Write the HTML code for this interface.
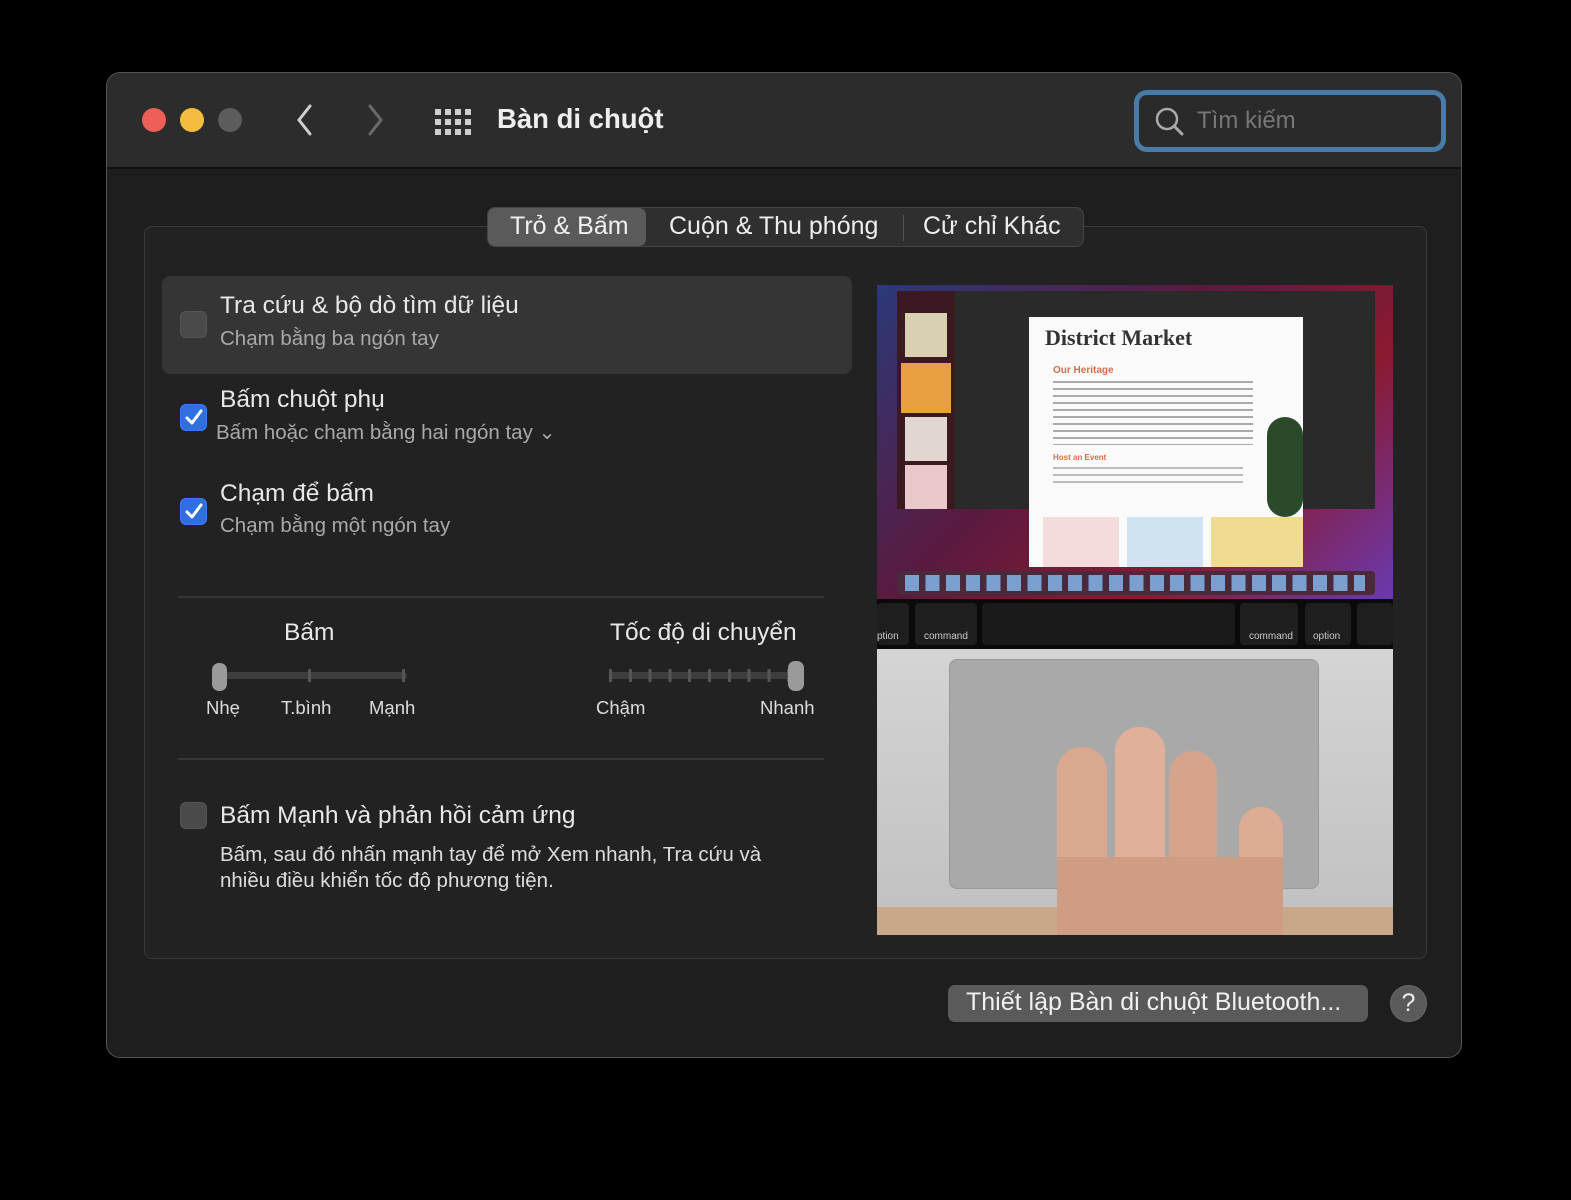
<!DOCTYPE html>
<html><head><meta charset="utf-8"><style>
*{margin:0;padding:0;box-sizing:border-box}
body{width:1571px;height:1200px;background:#000;font-family:"Liberation Sans","DejaVu Sans",sans-serif;position:relative;overflow:hidden;color:#e6e6e6}
.abs{position:absolute}
.win{left:106px;top:72px;width:1356px;height:986px;border-radius:14px;background:#1e1e1e;border:1px solid #555;overflow:hidden}
.tb{left:0;top:0;width:100%;height:96px;background:#2c2c2c;border-bottom:2px solid #111}
.dot{width:24px;height:24px;border-radius:50%;top:35px}
.panel{left:37px;top:153px;width:1283px;height:733px;border:1px solid #3a3a3a;border-radius:8px;background:#222}
.cb{width:27px;height:27px;border-radius:6px;background:#4a4a4a;border:1px solid #555}
.cbon{background:#2f6fe0;border-color:#3d7cf0}
.t1{font-size:24.5px;color:#e8e8e8}
.t2{font-size:20.5px;color:#a9a9a9}
.lbl{font-size:18.5px;color:#ddd}
.tab{font-size:25px}
</style></head><body>
<div class="abs win">
 <div class="abs tb">
  <div class="abs dot" style="left:35px;background:#ed5f57"></div>
  <div class="abs dot" style="left:73px;background:#f4bd3f"></div>
  <div class="abs dot" style="left:111px;background:#5c5c5c"></div>
  <svg class="abs" style="left:188px;top:30px" width="20" height="34"><path d="M15 3 L4 17 L15 31" stroke="#cfcfcf" stroke-width="3" fill="none" stroke-linecap="round"/></svg>
  <svg class="abs" style="left:258px;top:30px" width="20" height="34"><path d="M5 3 L16 17 L5 31" stroke="#6a6a6a" stroke-width="3" fill="none" stroke-linecap="round"/></svg>
  <svg class="abs" style="left:328px;top:36px" width="36" height="26" fill="#cfcfcf">
   <rect x="0" y="0" width="6" height="6"/><rect x="10" y="0" width="6" height="6"/><rect x="20" y="0" width="6" height="6"/><rect x="30" y="0" width="6" height="6"/>
   <rect x="0" y="10" width="6" height="6"/><rect x="10" y="10" width="6" height="6"/><rect x="20" y="10" width="6" height="6"/><rect x="30" y="10" width="6" height="6"/>
   <rect x="0" y="20" width="6" height="6"/><rect x="10" y="20" width="6" height="6"/><rect x="20" y="20" width="6" height="6"/><rect x="30" y="20" width="6" height="6"/></svg>
  <div class="abs" style="left:390px;top:30px;font-size:27.5px;font-weight:bold;color:#eee">Bàn di chuột</div>
  <div class="abs" style="left:1027px;top:17px;width:312px;height:62px;border:5px solid #4a7aa8;border-radius:13px;background:#2a2a2a"></div>
  <svg class="abs" style="left:1047px;top:33px" width="32" height="32"><circle cx="13" cy="13" r="10" stroke="#aaa" stroke-width="2.5" fill="none"/><path d="M20 20 L28 28" stroke="#aaa" stroke-width="3" stroke-linecap="round"/></svg>
  <div class="abs" style="left:1090px;top:34px;font-size:24px;color:#777">Tìm kiếm</div>
 </div>
 <div class="abs panel"></div>
 <div class="abs" style="left:380px;top:134px;width:597px;height:40px;border-radius:8px;background:#2f2f2f;border:1px solid #444"></div>
 <div class="abs" style="left:381px;top:135px;width:158px;height:38px;border-radius:7px;background:#5a5a5a"></div>
 <div class="abs tab" style="left:403px;top:139px;color:#f0f0f0">Trỏ &amp; Bấm</div>
 <div class="abs tab" style="left:562px;top:139px;color:#eee">Cuộn &amp; Thu phóng</div>
 <div class="abs" style="left:796px;top:142px;width:1px;height:26px;background:#555"></div>
 <div class="abs tab" style="left:816px;top:139px;color:#eee">Cử chỉ Khác</div>

 <div class="abs" style="left:55px;top:203px;width:690px;height:98px;border-radius:8px;background:#353535"></div>
 <div class="abs cb" style="left:73px;top:238px"></div>
 <div class="abs t1" style="left:113px;top:219px">Tra cứu &amp; bộ dò tìm dữ liệu</div>
 <div class="abs t2" style="left:113px;top:254px">Chạm bằng ba ngón tay</div>

 <div class="abs cb cbon" style="left:73px;top:331px"></div>
 <svg class="abs" style="left:76px;top:334px" width="22" height="22"><path d="M4 11 L9 16 L18 4" stroke="#fff" stroke-width="3" fill="none" stroke-linecap="round" stroke-linejoin="round"/></svg>
 <div class="abs t1" style="left:113px;top:313px">Bấm chuột phụ</div>
 <div class="abs t2" style="left:109px;top:347px">Bấm hoặc chạm bằng hai ngón tay ⌄</div>

 <div class="abs cb cbon" style="left:73px;top:425px"></div>
 <svg class="abs" style="left:76px;top:428px" width="22" height="22"><path d="M4 11 L9 16 L18 4" stroke="#fff" stroke-width="3" fill="none" stroke-linecap="round" stroke-linejoin="round"/></svg>
 <div class="abs t1" style="left:113px;top:407px">Chạm để bấm</div>
 <div class="abs t2" style="left:113px;top:441px">Chạm bằng một ngón tay</div>

 <div class="abs" style="left:71px;top:523px;width:646px;height:2px;background:#363636"></div>
 <div class="abs t1" style="left:177px;top:546px">Bấm</div>
 <div class="abs t1" style="left:503px;top:546px">Tốc độ di chuyển</div>
 <div class="abs" style="left:112px;top:599px;width:188px;height:7px;background:#3d3d3d;border-radius:3px"></div>
 <div class="abs" style="left:201px;top:596px;width:3px;height:13px;background:#555"></div>
 <div class="abs" style="left:295px;top:596px;width:3px;height:13px;background:#555"></div>
 <div class="abs" style="left:105px;top:590px;width:15px;height:28px;border-radius:7px;background:#9a9a9a"></div>
 <div class="abs" style="left:502px;top:599px;width:186px;height:7px;background:#3d3d3d;border-radius:3px"></div>
 <div class="abs" style="left:502px;top:596px;width:180px;height:13px;background:repeating-linear-gradient(90deg,#555 0 3px,transparent 3px 19.8px)"></div>
 <div class="abs" style="left:681px;top:588px;width:16px;height:30px;border-radius:7px;background:#9a9a9a"></div>
 <div class="abs lbl" style="left:99px;top:624px">Nhẹ</div>
 <div class="abs lbl" style="left:174px;top:624px">T.bình</div>
 <div class="abs lbl" style="left:262px;top:624px">Mạnh</div>
 <div class="abs lbl" style="left:489px;top:624px">Chậm</div>
 <div class="abs lbl" style="left:653px;top:624px">Nhanh</div>
 <div class="abs" style="left:71px;top:685px;width:646px;height:2px;background:#363636"></div>

 <div class="abs cb" style="left:73px;top:729px"></div>
 <div class="abs t1" style="left:113px;top:729px">Bấm Mạnh và phản hồi cảm ứng</div>
 <div class="abs" style="left:113px;top:769px;font-size:20.5px;color:#ddd;line-height:26px">Bấm, sau đó nhấn mạnh tay để mở Xem nhanh, Tra cứu và<br>nhiều điều khiển tốc độ phương tiện.</div>

 <div class="abs" style="left:770px;top:204px;width:516px;height:658px;overflow:hidden;background:#c9c9c9">
  <div class="abs" style="left:0;top:0;width:516px;height:322px;background:linear-gradient(135deg,#2a3a7a 0%,#5a1a40 40%,#8a1a30 70%,#6a3ab0 100%)"></div>
  <div class="abs" style="left:0;top:0;width:516px;height:8px;background:#222"></div>
  <div class="abs" style="left:20px;top:14px;width:478px;height:218px;background:#2a2a2a"></div>
  <div class="abs" style="left:20px;top:14px;width:58px;height:218px;background:#3a1a20"></div>
  <div class="abs" style="left:28px;top:36px;width:42px;height:44px;background:#d8d0b0"></div>
  <div class="abs" style="left:24px;top:86px;width:50px;height:50px;background:#e8a040"></div>
  <div class="abs" style="left:28px;top:140px;width:42px;height:44px;background:#e0d8d0"></div>
  <div class="abs" style="left:28px;top:188px;width:42px;height:44px;background:#e8c8c8"></div>
  <div class="abs" style="left:152px;top:40px;width:274px;height:250px;background:#fafafa"></div>
  <div class="abs" style="left:168px;top:48px;font-family:'Liberation Serif',serif;font-size:22px;font-weight:bold;color:#333">District Market</div>
  <div class="abs" style="left:176px;top:88px;font-size:10px;font-weight:bold;color:#d0704a">Our Heritage</div>
  <div class="abs" style="left:176px;top:104px;width:200px;height:64px;background:repeating-linear-gradient(180deg,#aaa 0 2px,transparent 2px 7px)"></div>
  <div class="abs" style="left:176px;top:176px;font-size:8px;font-weight:bold;color:#d0704a">Host an Event</div>
  <div class="abs" style="left:176px;top:190px;width:190px;height:20px;background:repeating-linear-gradient(180deg,#bbb 0 2px,transparent 2px 7px)"></div>
  <div class="abs" style="left:166px;top:240px;width:76px;height:50px;background:#f4dcdc"></div>
  <div class="abs" style="left:250px;top:240px;width:76px;height:50px;background:#cfe4f0"></div>
  <div class="abs" style="left:334px;top:240px;width:92px;height:50px;background:#f0dc90"></div>
  <div class="abs" style="left:390px;top:140px;width:36px;height:100px;background:#2a4a2a;border-radius:20px"></div>
  <div class="abs" style="left:20px;top:294px;width:478px;height:24px;background:#4a2a3a;border-radius:4px"></div>
  <div class="abs" style="left:28px;top:298px;width:460px;height:16px;background:repeating-linear-gradient(90deg,#7aa0d0 0 14px,transparent 14px 20.4px)"></div>
  <div class="abs" style="left:0;top:322px;width:516px;height:50px;background:#0a0a0a"></div>
  <div class="abs" style="left:0;top:326px;width:32px;height:42px;background:#1e1e1e;border-radius:4px"></div>
  <div class="abs" style="left:38px;top:326px;width:62px;height:42px;background:#1e1e1e;border-radius:4px"></div>
  <div class="abs" style="left:105px;top:326px;width:253px;height:42px;background:#1a1a1a;border-radius:4px"></div>
  <div class="abs" style="left:363px;top:326px;width:58px;height:42px;background:#1e1e1e;border-radius:4px"></div>
  <div class="abs" style="left:428px;top:326px;width:46px;height:42px;background:#1e1e1e;border-radius:4px"></div>
  <div class="abs" style="left:480px;top:326px;width:36px;height:42px;background:#1e1e1e;border-radius:4px"></div>
  <div class="abs" style="left:0;top:354px;font-size:10px;color:#ccc">ption</div>
  <div class="abs" style="left:47px;top:354px;font-size:10px;color:#ccc">command</div>
  <div class="abs" style="left:372px;top:354px;font-size:10px;color:#ccc">command</div>
  <div class="abs" style="left:436px;top:354px;font-size:10px;color:#ccc">option</div>
  <div class="abs" style="left:0;top:372px;width:516px;height:258px;background:linear-gradient(180deg,#d4d4d4,#c2c2c2)"></div>
  <div class="abs" style="left:72px;top:382px;width:370px;height:230px;border-radius:8px;background:#a9a9a9;border:1px solid #999"></div>
  <div class="abs" style="left:0;top:630px;width:516px;height:28px;background:#c8a888"></div>
  <div class="abs" style="left:180px;top:470px;width:50px;height:200px;border-radius:24px;background:#d9a890"></div>
  <div class="abs" style="left:238px;top:450px;width:50px;height:220px;border-radius:24px;background:#e0b09a"></div>
  <div class="abs" style="left:292px;top:474px;width:48px;height:200px;border-radius:24px;background:#d6a48c"></div>
  <div class="abs" style="left:362px;top:530px;width:44px;height:140px;border-radius:22px;background:#dcac94"></div>
  <div class="abs" style="left:180px;top:580px;width:226px;height:80px;background:#cf9c84"></div>
 </div>

 <div class="abs" style="left:841px;top:912px;width:420px;height:37px;border-radius:7px;background:#5a5a5a;font-size:25px;color:#f0f0f0;padding:3px 0 0 18px;white-space:nowrap">Thiết lập Bàn di chuột Bluetooth...</div>
 <div class="abs" style="left:1283px;top:912px;width:37px;height:37px;border-radius:50%;background:#5a5a5a;border:1px solid #6a6a6a;font-size:25px;color:#eee;text-align:center;line-height:35px">?</div>
</div>
</body></html>
